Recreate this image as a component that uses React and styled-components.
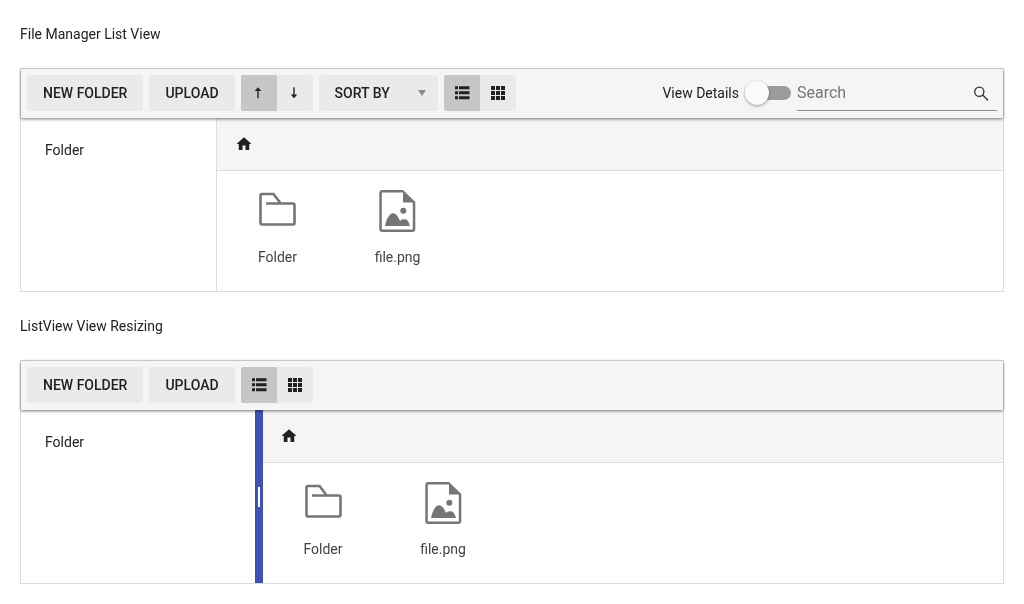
import React from 'react';
import styled, { createGlobalStyle } from 'styled-components';

const GlobalStyle = createGlobalStyle`
    html, body {
        margin: 0;
        padding: 0;
        background: #fff;
        font-family: Roboto, "Liberation Sans", sans-serif;
        color: #212121;
    }
`;

const Page = styled.div`
    padding: 0 20px 20px;
    will-change: transform;
`;

const Title = styled.div`
    height: 68px;
    display: flex;
    align-items: center;
    font-size: 14px;
    color: #212121;
`;

const Manager = styled.div`
    height: 224px;
    box-sizing: border-box;
    border: 1px solid #dcdcdc;
    display: flex;
    flex-direction: column;
`;

const Toolbar = styled.div`
    position: relative;
    z-index: 1;
    height: 49px;
    flex: none;
    box-sizing: border-box;
    background: #f5f5f5;
    padding: 6px 6px 7px;
    display: flex;
    align-items: center;
    gap: 6px;
    box-shadow: 0 1px 3px rgba(0, 0, 0, 0.55);
`;

const Button = styled.button`
    height: 36px;
    border: 0;
    border-radius: 2px;
    background: #eaeaea;
    padding: 0 16px;
    font: 500 14px Roboto, sans-serif;
    color: #212121;
    display: flex;
    align-items: center;
`;

const SortSelect = styled(Button)`
    width: 119px;
    padding: 0 12px 0 16px;
    justify-content: space-between;
`;

const Caret = styled.span`
    width: 0;
    height: 0;
    border-left: 4px solid transparent;
    border-right: 4px solid transparent;
    border-top: 6px solid #8a8a8a;
`;

const ToggleGroup = styled.div`
    display: flex;
    border-radius: 2px;
    overflow: hidden;
`;

const ToggleButton = styled.button`
    width: 36px;
    height: 36px;
    border: 0;
    padding: 0;
    background: ${(p) => (p.$active ? '#c6c6c6' : '#eaeaea')};
    display: flex;
    align-items: center;
    justify-content: center;
    color: #212121;
`;

const RightTools = styled.div`
    margin-left: auto;
    display: flex;
    align-items: center;
`;

const SwitchLabel = styled.span`
    font-size: 14px;
    color: #212121;
`;

const Switch = styled.div`
    position: relative;
    width: 34px;
    height: 14px;
    margin: 0 6px 0 18px;
    border-radius: 7px;
    background: #9b9b9b;
`;

const Thumb = styled.div`
    position: absolute;
    left: -12px;
    top: -5px;
    width: 24px;
    height: 24px;
    border-radius: 50%;
    background: #fafafa;
    box-shadow: 0 1px 3px rgba(0, 0, 0, 0.4);
`;

const SearchBox = styled.div`
    width: 200px;
    height: 36px;
    box-sizing: border-box;
    border-bottom: 1px solid #8c8c8c;
    display: flex;
    align-items: center;
    justify-content: space-between;
    padding: 0 8px 0 0;
    font-size: 16px;
    color: #757575;
`;

const Body = styled.div`
    flex: 1;
    display: flex;
    min-height: 0;
`;

const Sidebar = styled.div`
    width: ${(p) => p.$width}px;
    flex: none;
    box-sizing: border-box;
    padding: 23px 24px;
    font-size: 14px;
    line-height: 18px;
    color: #212121;
    border-right: ${(p) => (p.$plain ? '1px solid #dcdcdc' : '0')};
`;

const Splitter = styled.div`
    position: relative;
    width: 8px;
    flex: none;
    background: #3f51b5;
`;

const Grip = styled.div`
    position: absolute;
    left: 3px;
    top: 77px;
    width: 2px;
    height: 20px;
    background: #fff;
`;

const Main = styled.div`
    flex: 1;
    display: flex;
    flex-direction: column;
`;

const Breadcrumb = styled.div`
    height: 53px;
    flex: none;
    box-sizing: border-box;
    background: #f5f5f5;
    border-bottom: 1px solid #dcdcdc;
    padding: 0 17.5px;
    display: flex;
    align-items: center;
`;

const Files = styled.div`
    display: flex;
`;

const FileItem = styled.div`
    width: 120px;
    display: flex;
    flex-direction: column;
    align-items: center;
    padding-top: 16px;
    font-size: 14px;
    color: #424242;
`;

const FileName = styled.span`
    margin: 13px 0 0 1px;
    line-height: 18px;
`;

const IconSvg = styled.svg`
    display: block;
    fill: currentColor;
`;

const BigIcon = styled.svg`
    display: block;
    width: 48px;
    height: 48px;
    fill: #757575;
`;

const FolderOutline = styled.path`
    fill: none;
    stroke: #757575;
    stroke-width: 2.6;
`;

const SearchStroke = styled.g`
    fill: none;
    stroke: #333;
    stroke-width: 1.3;
`;

const HomeIcon = () => (
    <IconSvg width="18" height="18" viewBox="0 0 24 24">
        <path d="M10 20v-6h4v6h5v-8h3L12 3 2 12h3v8z" />
    </IconSvg>
);

const ArrowUp = () => (
    <IconSvg width="18" height="18" viewBox="0 0 18 18">
        <path d="M8 3.300L4.700 7H7.300V14.300H8.700V7H11.300z" />
    </IconSvg>
);

const ArrowDown = () => (
    <IconSvg width="18" height="18" viewBox="0 0 18 18">
        <path d="M8 14.300L4.700 10.600H7.300V3.300H8.700V10.600H11.300z" />
    </IconSvg>
);

const ListIcon = () => (
    <IconSvg width="18" height="18" viewBox="0 0 18 18">
        <path d="M2 2.300h3v3H2zM6 2.300h10.500v3H6zM2 7.200h3v3H2zM6 7.200h10.500v3H6zM2 12.200h3v3H2zM6 12.200h10.500v3H6z" />
    </IconSvg>
);

const GridIcon = () => (
    <IconSvg width="18" height="18" viewBox="0 0 18 18">
        <path d="M2 2h4v4H2zM7 2h4v4H7zM12 2h4v4h-4zM2 7h4v4H2zM7 7h4v4H7zM12 7h4v4h-4zM2 12h4v4H2zM7 12h4v4H7zM12 12h4v4h-4z" />
    </IconSvg>
);

const SearchIcon = () => (
    <IconSvg width="18" height="18" viewBox="0 0 18 18">
        <SearchStroke>
            <circle cx="8.300" cy="7.700" r="4.600" />
            <path d="M11.700 11L17 16.500" />
        </SearchStroke>
    </IconSvg>
);

const FolderIcon = () => (
    <BigIcon viewBox="0 0 48 48">
        <FolderOutline d="M13 16.500H40A1.500 1.500 0 0 1 41.500 18V36A1.500 1.500 0 0 1 40 37.500H9A1.500 1.500 0 0 1 7.500 36V8.500A1.500 1.500 0 0 1 9 7H20.500L27 15.500" />
    </BigIcon>
);

const ImageFileIcon = () => (
    <BigIcon viewBox="0 0 48 48">
        <path
            fillRule="evenodd"
            d="M9 3h21l12.300 12v27a3 3 0 0 1-3 3H9.300a3 3 0 0 1-3-3V6a3 3 0 0 1 3-3zM8.800 5.500v37h31V15.500H30V5.500z"
        />
        <circle cx="30.300" cy="23.700" r="3" />
        <path d="M12 39C13.500 32 16.500 26.300 20 26.300C23.500 26.300 25.500 30.500 27 34C28 32.500 30 32.300 32 32.300C34.500 32.300 36 35.500 37 39z" />
    </BigIcon>
);

function FileManager({ sidebarWidth, resizing, children }) {
    return (
        <Manager>
            <Toolbar>{children}</Toolbar>
            <Body>
                <Sidebar $width={sidebarWidth} $plain={!resizing}>Folder</Sidebar>
                {resizing && (
                    <Splitter>
                        <Grip />
                    </Splitter>
                )}
                <Main>
                    <Breadcrumb>
                        <HomeIcon />
                    </Breadcrumb>
                    <Files>
                        <FileItem>
                            <FolderIcon />
                            <FileName>Folder</FileName>
                        </FileItem>
                        <FileItem>
                            <ImageFileIcon />
                            <FileName>file.png</FileName>
                        </FileItem>
                    </Files>
                </Main>
            </Body>
        </Manager>
    );
}

const ViewToggle = () => (
    <ToggleGroup>
        <ToggleButton $active>
            <ListIcon />
        </ToggleButton>
        <ToggleButton>
            <GridIcon />
        </ToggleButton>
    </ToggleGroup>
);

export default function App() {
    return (
        <Page>
            <GlobalStyle />
            <Title>File Manager List View</Title>
            <FileManager sidebarWidth={196}>
                <Button>NEW FOLDER</Button>
                <Button>UPLOAD</Button>
                <ToggleGroup>
                    <ToggleButton $active>
                        <ArrowUp />
                    </ToggleButton>
                    <ToggleButton>
                        <ArrowDown />
                    </ToggleButton>
                </ToggleGroup>
                <SortSelect>
                    SORT BY
                    <Caret />
                </SortSelect>
                <ViewToggle />
                <RightTools>
                    <SwitchLabel>View Details</SwitchLabel>
                    <Switch>
                        <Thumb />
                    </Switch>
                    <SearchBox>
                        Search
                        <SearchIcon />
                    </SearchBox>
                </RightTools>
            </FileManager>
            <Title>ListView View Resizing</Title>
            <FileManager sidebarWidth={233.5} resizing>
                <Button>NEW FOLDER</Button>
                <Button>UPLOAD</Button>
                <ViewToggle />
            </FileManager>
        </Page>
    );
}
